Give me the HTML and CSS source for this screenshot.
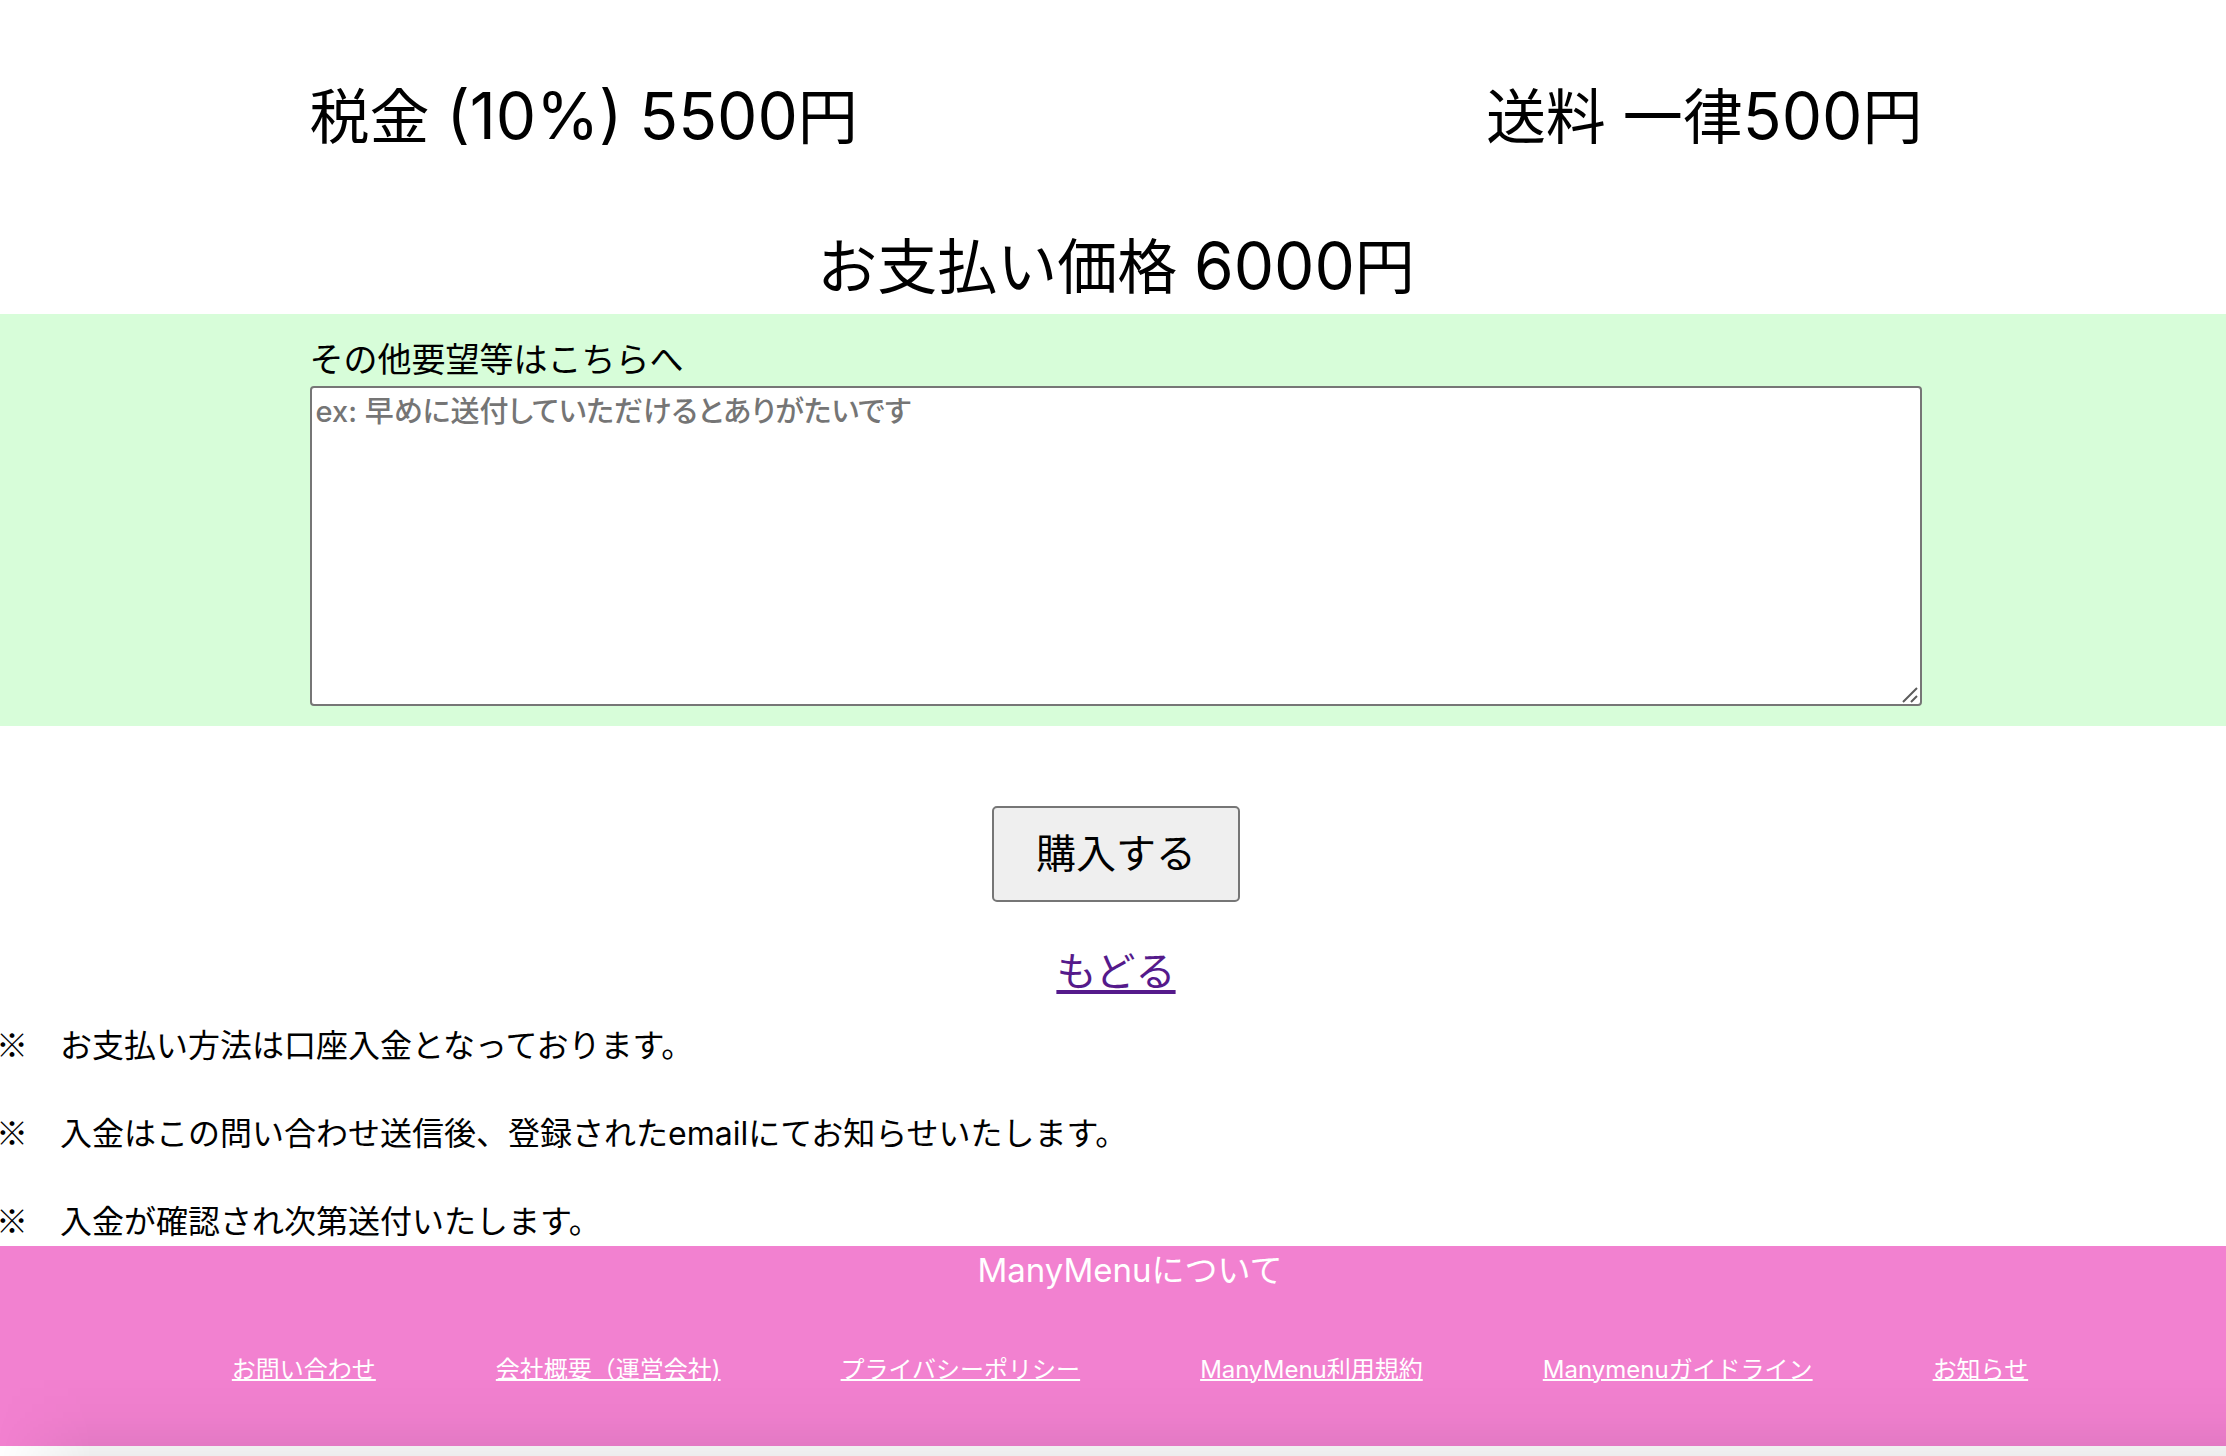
FILE: index.html
```html
<!DOCTYPE html>
<html lang="ja">
<head>
<meta charset="utf-8">
<meta name="viewport" content="width=device-width, initial-scale=1">
<title>ManyMenu</title>
<link rel="stylesheet" href="styles.css">
</head>
<body>
<div class="page">
  <main>
    <section class="price">
      <div class="price-row">
        <p>税金 <span class="num">(10%)</span> <span class="num">5500</span>円</p>
        <p>送料 一律<span class="num">500</span>円</p>
      </div>
      <p class="price-total">お支払い価格 <span class="num">6000</span>円</p>
    </section>
    <form class="order">
      <div class="request">
        <label class="request-label" for="request">その他要望等はこちらへ</label>
        <div class="request-box">
          <textarea class="request-input" id="request" placeholder="ex: 早めに送付していただけるとありがたいです"></textarea>
          <svg class="request-grip" viewBox="0 0 16 16" aria-hidden="true"><path d="M1 15 15 1M9 15l6-6"/></svg>
        </div>
      </div>
      <div class="actions">
        <button class="buy" type="submit">購入する</button>
        <a class="back" href="#">もどる</a>
      </div>
    </form>
    <section class="notes">
      <p><span class="mark">※　</span>お支払い方法は口座入金となっております。</p>
      <p><span class="mark">※　</span>入金はこの問い合わせ送信後、登録されたemailにてお知らせいたします。</p>
      <p><span class="mark">※　</span>入金が確認され次第送付いたします。</p>
    </section>
  </main>
  <footer class="footer">
    <p class="footer-title">ManyMenuについて</p>
    <nav class="footer-nav">
      <a href="#">お問い合わせ</a>
      <a href="#">会社概要（運営会社)</a>
      <a href="#">プライバシーポリシー</a>
      <a href="#">ManyMenu利用規約</a>
      <a href="#">Manymenuガイドライン</a>
      <a href="#">お知らせ</a>
    </nav>
  </footer>
</div>
</body>
</html>
```
FILE: styles.css
```css
* {
  box-sizing: border-box;
}

body {
  margin: 0;
  overflow-x: hidden;
  background: #fff;
  color: #000;
  font-family: Inter, "Noto Sans CJK JP", sans-serif;
  font-size: 32px;
  line-height: 48px;
}

p {
  margin: 0;
}

.page {
  position: relative;
  min-height: 100vh;
  margin: 0 -10px 0 -4px;
}

/* soft shade along the lower edge */
.page::after {
  content: "";
  position: absolute;
  right: 0;
  bottom: 0;
  left: 0;
  height: 80px;
  background: linear-gradient(rgba(0, 0, 0, 0), rgba(0, 0, 0, 0.02) 50%, rgba(0, 0, 0, 0.07));
  mask-image: linear-gradient(to right, transparent, #000 96px);
  pointer-events: none;
}

.price {
  padding: 72px 14% 2px;
  font-size: 60px;
  line-height: 90px;
}

.price-row {
  display: flex;
  justify-content: space-between;
  margin-bottom: 60px;
}

.price-total {
  text-align: center;
}

.num {
  font-size: 64px;
  line-height: 1;
}

.request {
  padding: 20px 14%;
  background: #d7fdd9;
}

.request-label {
  display: block;
  font-size: 34px;
  line-height: 52px;
}

.request-box {
  position: relative;
}

.request-input {
  display: block;
  width: 100%;
  height: 320px;
  padding: 4px;
  border: 2px solid #767676;
  border-radius: 4px;
  background: #fff;
  font-family: Inter, "Noto Sans CJK JP", sans-serif;
  font-size: 29px;
  font-weight: 500;
  font-feature-settings: "palt";
  line-height: 40px;
  resize: none;
}

.request-input::placeholder {
  color: #757575;
}

.request-grip {
  position: absolute;
  right: 4px;
  bottom: 3px;
  width: 16px;
  height: 16px;
  fill: none;
  stroke: #5c5c5c;
  stroke-width: 2;
}

.actions {
  display: flex;
  flex-direction: column;
  align-items: center;
  padding: 80px 0 20px;
  font-size: 40px;
  line-height: 60px;
}

.buy {
  padding: 16px 42px;
  border: 2px solid #767676;
  border-radius: 5px;
  background: #efefef;
  color: #000;
  font: inherit;
}

.back {
  margin-top: 40px;
  color: #551a8b;
  text-decoration-thickness: 4px;
  text-underline-offset: 4px;
}

.notes {
  display: grid;
  gap: 40px;
}

.mark {
  font-family: "Noto Sans CJK JP", sans-serif;
  line-height: 1;
}

.footer {
  height: 200px;
  padding-left: 28px;
  background: #f281d0;
  color: #fff;
  text-align: center;
}

.footer-title {
  font-size: 33px;
}

.footer-nav {
  display: flex;
  justify-content: center;
  gap: 120px;
  margin-top: 58px;
  font-size: 24px;
  line-height: 36px;
  white-space: nowrap;
}

.footer-nav a {
  color: #fff;
  text-decoration-thickness: 2px;
}
```
